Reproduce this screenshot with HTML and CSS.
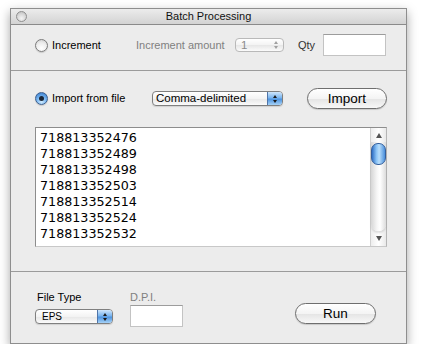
FILE: index.html
```html
<!DOCTYPE html>
<html lang="en">
<head>
  <meta charset="UTF-8">
  <title>Batch Processing</title>
  <link rel="stylesheet" href="styles.css">
</head>
<body>
  <div class="window">
    <div class="titlebar">
      <span class="close"></span>
      <span class="title">Batch Processing</span>
    </div>

    <div class="section sec-increment">
      <div class="row">
        <span class="radio"></span>
        <span class="label w-inc">Increment</span>
        <span class="label dim w-amount">Increment amount</span>
        <span class="popup stepper disabled">
          <span class="popup-text">1</span>
          <span class="popup-arrows"><i class="up"></i><i class="down"></i></span>
        </span>
        <span class="label qty">Qty</span>
        <span class="field qty-field"></span>
      </div>
    </div>

    <div class="section sec-import">
      <div class="row tall">
        <span class="radio on"></span>
        <span class="label w-import">Import from file</span>
        <span class="popup format">
          <span class="popup-text">Comma-delimited</span>
          <span class="popup-arrows"><i class="up"></i><i class="down"></i></span>
        </span>
        <span class="button import-btn">Import</span>
      </div>

      <div class="list">
        <div class="lines">
          <div>718813352476</div>
          <div>718813352489</div>
          <div>718813352498</div>
          <div>718813352503</div>
          <div>718813352514</div>
          <div>718813352524</div>
          <div>718813352532</div>
        </div>
        <div class="scrollbar">
          <div class="sb-up"><i></i></div>
          <div class="sb-track"><div class="sb-thumb"></div></div>
          <div class="sb-down"><i></i></div>
        </div>
      </div>
    </div>

    <div class="section sec-output">
      <div class="col col-type">
        <span class="label caption">File Type</span>
        <span class="popup filetype">
          <span class="popup-text">EPS</span>
          <span class="popup-arrows"><i class="up"></i><i class="down"></i></span>
        </span>
      </div>
      <div class="col col-dpi">
        <span class="label dim caption">D.P.I.</span>
        <span class="field dpi-field"></span>
      </div>
      <span class="button run-btn">Run</span>
    </div>
  </div>
</body>
</html>
```

FILE: styles.css
```css
body {
  margin: 0;
  background: #fff;
  font-family: "Liberation Sans", Arial, sans-serif;
  font-size: 11px;
  color: #000;
}
.window {
  margin: 8px 0 0 10px;
  width: 395px;
  border: 1px solid #8e8e8e;
  background: #ececec;
  box-shadow: 0 4px 10px rgba(0,0,0,0.35);
}
.titlebar {
  height: 15px;
  display: grid;
  grid-template-columns: 1fr auto 1fr;
  align-items: center;
  border-bottom: 1px solid #8a8a8a;
  background: linear-gradient(#ececec, #d3d3d3);
}
.close {
  margin-left: 5px;
  width: 11px;
  height: 11px;
  box-sizing: border-box;
  border-radius: 50%;
  border: 1px solid #8f8f8f;
  background: radial-gradient(circle at 50% 70%, #f4f4f4, #d4d4d4 60%, #b8b8b8);
}
.title {
  line-height: 15px;
  color: #111;
}

.section {
  box-sizing: border-box;
  border-bottom: 1px solid #9b9b9b;
}
.sec-increment {
  height: 46px;
  padding: 9px 0 0 24px;
}
.sec-import {
  height: 201px;
  padding: 17px 0 0 24px;
}
.sec-output {
  height: 71px;
  padding: 19px 0 0 24px;
  border-bottom: none;
  display: flex;
  align-items: flex-start;
}

.row {
  display: flex;
  align-items: center;
  height: 22px;
}
.row.tall {
  height: 21px;
}
.label {
  line-height: 13px;
  white-space: nowrap;
}
.dim {
  color: #808080;
}
.w-inc { margin-left: 4px; width: 84px; }
.w-amount { width: 99px; }
.w-import { margin-left: 4px; width: 100px; }
.qty { margin-left: 14px; width: 25px; color: #333; }

.radio {
  width: 13px;
  height: 13px;
  box-sizing: border-box;
  border-radius: 50%;
  border: 1px solid #7b7b7b;
  background: radial-gradient(circle at 50% 75%, #ffffff, #ececec 55%, #c9c9c9);
  box-shadow: 0 1px 1px rgba(0,0,0,0.15);
  display: flex;
  align-items: center;
  justify-content: center;
}
.radio.on {
  border-color: #3d5f8e;
  background: radial-gradient(circle at 50% 80%, #d2ecff 0, #7ab8f2 45%, #2e74c9 100%);
}
.radio.on::after {
  content: "";
  width: 5px;
  height: 5px;
  border-radius: 50%;
  background: #1b2738;
}

.field {
  box-sizing: border-box;
  background: #fff;
  border: 1px solid #c3c3c3;
  border-top-color: #9c9c9c;
}
.qty-field {
  width: 63px;
  height: 22px;
}
.dpi-field {
  margin-top: 1px;
  width: 53px;
  height: 22px;
}

.popup {
  display: flex;
  height: 15px;
  box-sizing: border-box;
  border: 1px solid #7f7f7f;
  border-radius: 4px;
  overflow: hidden;
  background: linear-gradient(#ffffff, #f3f3f3 50%, #e6e6e6 51%, #fbfbfb);
  box-shadow: 0 1px 1px rgba(0,0,0,0.12);
}
.popup-text {
  flex: 1;
  padding-left: 3px;
  font-size: 11.5px;
  line-height: 13px;
  white-space: nowrap;
}
.popup-arrows {
  width: 14px;
  border-left: 1px solid #4f74a8;
  background: linear-gradient(#cfe6fb, #79b4ee 45%, #4d93df 55%, #a6d2f7);
  display: flex;
  flex-direction: column;
  align-items: center;
  justify-content: center;
  gap: 2px;
}
.popup-arrows i {
  width: 0;
  height: 0;
  border-left: 2px solid transparent;
  border-right: 2px solid transparent;
}
.popup-arrows .up { border-bottom: 3px solid #1a1a1a; }
.popup-arrows .down { border-top: 3px solid #1a1a1a; }

.stepper {
  width: 49px;
  height: 14px;
}
.stepper .popup-text {
  padding-left: 5px;
}
.popup.disabled {
  border-color: #b9b9b9;
  box-shadow: none;
}
.disabled .popup-text {
  color: #8a8a8a;
}
.disabled .popup-arrows {
  background: none;
  border-left: none;
}
.disabled .popup-arrows .up { border-bottom-color: #a0a0a0; }
.disabled .popup-arrows .down { border-top-color: #a0a0a0; }

.format {
  width: 131px;
}
.filetype {
  margin-top: 5px;
  width: 78px;
}
.filetype .popup-text {
  padding-left: 6px;
  font-size: 10px;
}

.button {
  display: flex;
  align-items: center;
  justify-content: center;
  box-sizing: border-box;
  height: 21px;
  border: 1px solid #6e6e6e;
  border-radius: 11px;
  background: linear-gradient(#ffffff, #f4f4f4 50%, #e4e4e4 51%, #f8f8f8);
  box-shadow: 0 1px 1px rgba(0,0,0,0.15);
  font-size: 13.5px;
}
.import-btn {
  margin-left: 24px;
  width: 80px;
}
.run-btn {
  margin: 12px 0 0 112px;
  width: 81px;
}

.list {
  margin-top: 18px;
  width: 352px;
  height: 120px;
  box-sizing: border-box;
  border: 1px solid #8d8d8d;
  border-right-color: #b5b5b5;
  border-bottom-color: #c8c8c8;
  background: #fff;
  display: flex;
}
.lines {
  flex: 1;
  padding: 2px 0 0 4px;
  font-family: "DejaVu Sans", sans-serif;
  font-size: 12.7px;
  line-height: 16px;
}
.scrollbar {
  width: 15px;
  border-left: 1px solid #d0d0d0;
  display: flex;
  flex-direction: column;
  background: linear-gradient(90deg, #eeeeee, #ffffff 50%, #e9e9e9);
}
.sb-up,
.sb-down {
  display: flex;
  justify-content: center;
  align-items: center;
}
.sb-up { height: 14px; }
.sb-down { height: 15px; }
.sb-up i,
.sb-down i {
  width: 0;
  height: 0;
  border-left: 3px solid transparent;
  border-right: 3px solid transparent;
}
.sb-up i { border-bottom: 5px solid #555; }
.sb-down i { border-top: 5px solid #555; }
.sb-track {
  flex: 1;
  border-radius: 0 0 7px 7px;
  background: linear-gradient(90deg, #d6d6d6, #f6f6f6 40%, #ffffff 60%, #dcdcdc);
  box-shadow: 0 2px 2px rgba(0,0,0,0.12);
  padding-top: 1px;
}
.sb-thumb {
  height: 22px;
  box-sizing: border-box;
  border: 1px solid #345f9c;
  border-radius: 7px;
  background: linear-gradient(90deg, #2f6fc4, #8cc4f6 35%, #b9defb 55%, #4a8fdc);
}

.col {
  display: flex;
  flex-direction: column;
  align-items: flex-start;
}
.col-type {
  width: 78px;
}
.col-type .caption {
  padding-left: 2px;
}
.col-dpi {
  margin-left: 17px;
}
```
